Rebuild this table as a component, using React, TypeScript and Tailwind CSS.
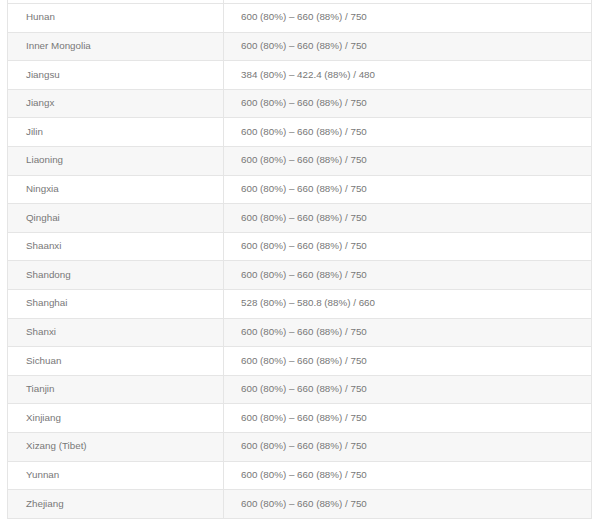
import React from 'react';

const rows: [string, string][] = [
  ['Hunan', '600 (80%) – 660 (88%) / 750'],
  ['Inner Mongolia', '600 (80%) – 660 (88%) / 750'],
  ['Jiangsu', '384 (80%) – 422.4 (88%) / 480'],
  ['Jiangx', '600 (80%) – 660 (88%) / 750'],
  ['Jilin', '600 (80%) – 660 (88%) / 750'],
  ['Liaoning', '600 (80%) – 660 (88%) / 750'],
  ['Ningxia', '600 (80%) – 660 (88%) / 750'],
  ['Qinghai', '600 (80%) – 660 (88%) / 750'],
  ['Shaanxi', '600 (80%) – 660 (88%) / 750'],
  ['Shandong', '600 (80%) – 660 (88%) / 750'],
  ['Shanghai', '528 (80%) – 580.8 (88%) / 660'],
  ['Shanxi', '600 (80%) – 660 (88%) / 750'],
  ['Sichuan', '600 (80%) – 660 (88%) / 750'],
  ['Tianjin', '600 (80%) – 660 (88%) / 750'],
  ['Xinjiang', '600 (80%) – 660 (88%) / 750'],
  ['Xizang (Tibet)', '600 (80%) – 660 (88%) / 750'],
  ['Yunnan', '600 (80%) – 660 (88%) / 750'],
  ['Zhejiang', '600 (80%) – 660 (88%) / 750'],
];

export default function App() {
  return (
    <div className="w-[600px] h-[527px] bg-white overflow-hidden font-['Liberation_Sans','Arial',sans-serif] text-[9.8px] text-[#777]">
      <div className="ml-[7px] w-[585px] border-x border-b border-[#e5e5e5]">
        {/* tail of the row above, cut off by the screenshot */}
        <div className="flex h-[3px]">
          <div className="w-[216px] border-r border-[#e5e5e5]" />
          <div className="flex-1" />
        </div>
        {rows.map(([region, score], i) => (
          <div
            key={region}
            className={`flex h-[28.6px] items-center border-t border-[#e5e5e5] ${i % 2 === 1 ? 'bg-[#f7f7f7]' : 'bg-white'}`}
          >
            <div className="w-[216px] h-full flex items-center pl-[18px] border-r border-[#e5e5e5]">{region}</div>
            <div className="flex-1 h-full flex items-center pl-[17px]">{score}</div>
          </div>
        ))}
      </div>
    </div>
  );
}
